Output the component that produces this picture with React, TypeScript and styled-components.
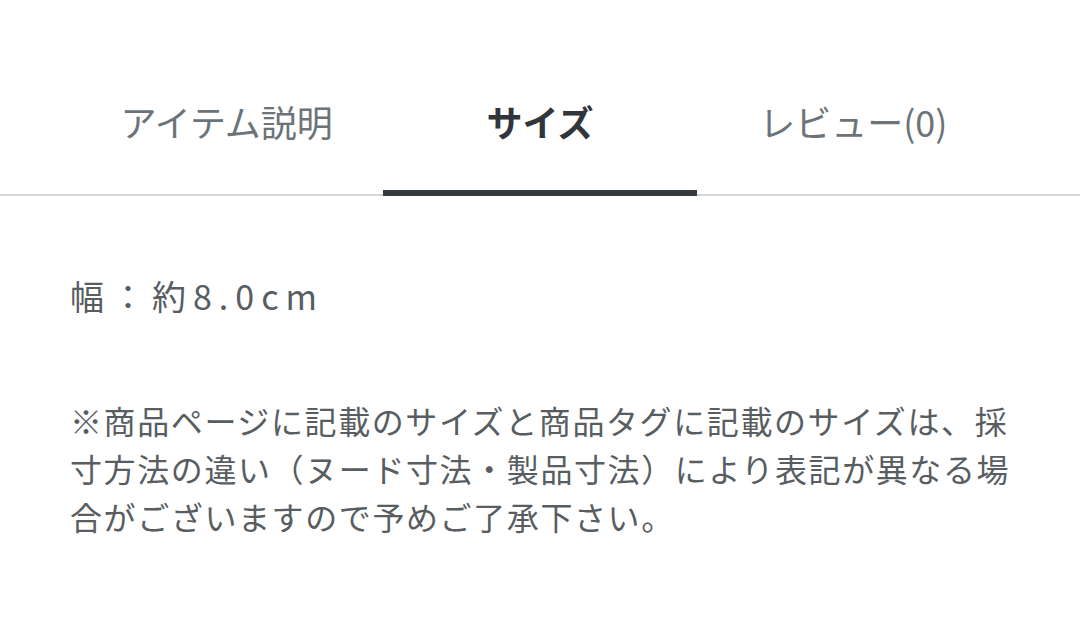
import React from "react";
import styled, { createGlobalStyle } from "styled-components";

const GlobalStyle = createGlobalStyle`
  html, body {
    margin: 0;
    padding: 0;
    background: #ffffff;
  }
  body {
    font-family: "Noto Sans CJK JP", "Noto Sans", sans-serif;
  }
`;

const Page = styled.div`
  width: 1080px;
  height: 642px;
  background: #ffffff;
  overflow: hidden;
`;

const TabBar = styled.div`
  display: flex;
  height: 196px;
  padding: 0 70px;
  box-sizing: border-box;
  border-bottom: 2px solid #d6d6d6;
`;

const Tab = styled.div<{ $active?: boolean }>`
  flex: 1;
  position: relative;
  display: flex;
  align-items: flex-end;
  justify-content: center;
  padding-bottom: 55px;
  box-sizing: border-box;
  font-size: 36px;
  line-height: 36px;
  font-weight: ${(p) => (p.$active ? 700 : 400)};
  color: ${(p) => (p.$active ? "#30363b" : "#6c7479")};

  &::after {
    content: "";
    display: ${(p) => (p.$active ? "block" : "none")};
    position: absolute;
    left: 0;
    right: 0;
    bottom: -2px;
    height: 6px;
    background: #343a40;
  }
`;

const Body = styled.div`
  padding: 0 70px;
  color: #575d61;
`;

const SizeLine = styled.p`
  margin: 76px 0 0;
  font-size: 34px;
  line-height: 48px;
  letter-spacing: 7px;
`;

const Note = styled.p`
  margin: 76px 0 0;
  font-size: 32px;
  line-height: 48px;
  letter-spacing: 1.6px;
  white-space: nowrap;
`;

export default function App() {
  return (
    <Page>
      <GlobalStyle />
      <TabBar>
        <Tab>アイテム説明</Tab>
        <Tab $active>サイズ</Tab>
        <Tab>レビュー(0)</Tab>
      </TabBar>
      <Body>
        <SizeLine>幅：約8.0cm</SizeLine>
        <Note>
          ※商品ページに記載のサイズと商品タグに記載のサイズは、採
          <br />
          寸方法の違い（ヌード寸法・製品寸法）により表記が異なる場
          <br />
          合がございますので予めご了承下さい。
        </Note>
      </Body>
    </Page>
  );
}
